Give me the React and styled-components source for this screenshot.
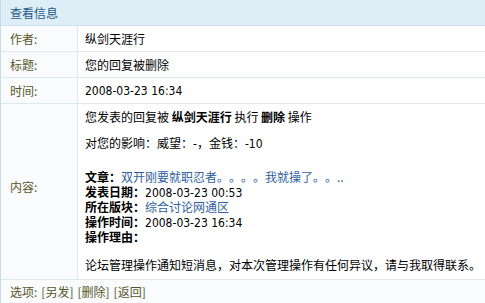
import React from "react";
import styled, { createGlobalStyle } from "styled-components";

const GlobalStyle = createGlobalStyle`
  body {
    margin: 0;
    background: #ffffff;
    font-family: "Noto Sans CJK SC", sans-serif;
    font-size: 12px;
    color: #000000;
    text-spacing-trim: space-all;
  }
`;

const rows = [
  { label: "作者:", value: "纵剑天涯行" },
  { label: "标题:", value: "您的回复被删除" },
  { label: "时间:", value: <Num>2008-03-23 16:34</Num> },
];

function App() {
  return (
    <>
      <GlobalStyle />
      <Panel>
        <Header>查看信息</Header>
        {rows.map((r) => (
          <Row key={r.label}>
            <Label>{r.label}</Label>
            <Value>{r.value}</Value>
          </Row>
        ))}
        <Row>
          <Label $lift={10}>内容:</Label>
          <Content>
            <Line>
              您发表的回复被 <Key>纵剑天涯行</Key> 执行 <Key>删除</Key> 操作
            </Line>
            <Line $gap={11}>
              对您的影响：威望：<Num>-</Num>，金钱：<Num>-10</Num>
            </Line>
            <Line $gap={19}>
              <Key>文章：</Key>
              <Link>双开刚要就职忍者。。。。我就操了。。..</Link>
            </Line>
            <Line>
              <Key>发表日期：</Key>
              <Num>2008-03-23 00:53</Num>
            </Line>
            <Line>
              <Key>所在版块：</Key>
              <Link>综合讨论网通区</Link>
            </Line>
            <Line>
              <Key>操作时间：</Key>
              <Num>2008-03-23 16:34</Num>
            </Line>
            <Line>
              <Key>操作理由：</Key>
            </Line>
            <Line $gap={13}>
              论坛管理操作通知短消息，对本次管理操作有任何异议，请与我取得联系。
            </Line>
          </Content>
        </Row>
        <Footer>
          选项: <FootLink>[另发]</FootLink> <FootLink>[删除]</FootLink>{" "}
          <FootLink>[返回]</FootLink>
        </Footer>
      </Panel>
    </>
  );
}

export default App;

function Num({ children }) {
  return <Latin>{children}</Latin>;
}

const Latin = styled.span`
  font-family: "DejaVu Sans Condensed", "DejaVu Sans", sans-serif;
  line-height: 12px;
`;

const Panel = styled.div`
  width: 485px;
  height: 303px;
  box-sizing: border-box;
  border-left: 1px solid #c7dce9;
  overflow: hidden;
`;

const Header = styled.div`
  height: 26px;
  box-sizing: border-box;
  display: flex;
  align-items: center;
  padding-left: 9px;
  background: #deeef7;
  border-bottom: 1px solid #cfe2ec;
  color: #1e5a88;
`;

const Row = styled.div`
  display: grid;
  grid-template-columns: 77px 1fr;
  min-height: 26px;
  box-sizing: border-box;
  border-bottom: 1px solid #dde9f0;
`;

const Label = styled.div`
  display: flex;
  align-items: center;
  padding-left: 9px;
  padding-bottom: ${(p) => p.$lift || 0}px;
  background: #f9fbfc;
  border-right: 1px solid #dbe8f0;
  color: #57572a;
`;

const Value = styled.div`
  display: flex;
  align-items: center;
  padding-left: 7px;
  white-space: nowrap;
`;

const Content = styled.div`
  padding: 5px 0 7px 7px;
  white-space: nowrap;
`;

const Line = styled.div`
  line-height: 15px;
  height: 15px;
  margin-top: ${(p) => p.$gap || 0}px;
`;

const Key = styled.b`
  font-weight: bold;
`;

const Link = styled.span`
  color: #2f5f9e;
`;

const Footer = styled.div`
  height: 23px;
  display: flex;
  align-items: center;
  gap: 4px;
  padding-left: 9px;
  padding-bottom: 1px;
  box-sizing: border-box;
  background: #f9fbfc;
  color: #57572a;
  line-height: 15px;
`;

const FootLink = styled.span`
  color: #57572a;
`;
